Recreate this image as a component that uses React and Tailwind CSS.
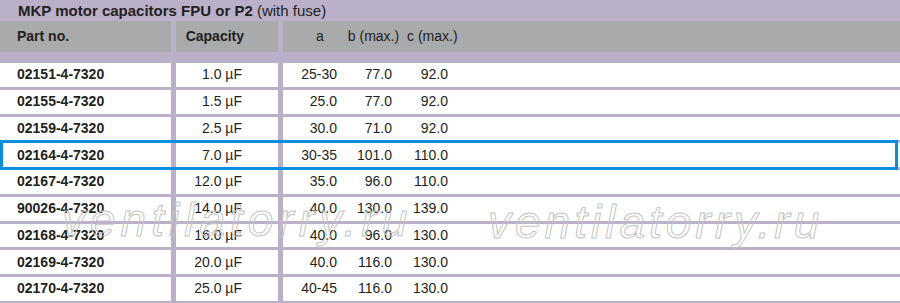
import React from "react";

const rows = [
  { part: "02151-4-7320", cap: "1.0 µF", a: "25-30", b: "77.0", c: "92.0" },
  { part: "02155-4-7320", cap: "1.5 µF", a: "25.0", b: "77.0", c: "92.0" },
  { part: "02159-4-7320", cap: "2.5 µF", a: "30.0", b: "71.0", c: "92.0" },
  { part: "02164-4-7320", cap: "7.0 µF", a: "30-35", b: "101.0", c: "110.0", active: true },
  { part: "02167-4-7320", cap: "12.0 µF", a: "35.0", b: "96.0", c: "110.0" },
  { part: "90026-4-7320", cap: "14.0 µF", a: "40.0", b: "130.0", c: "139.0" },
  { part: "02168-4-7320", cap: "16.0 µF", a: "40.0", b: "96.0", c: "130.0" },
  { part: "02169-4-7320", cap: "20.0 µF", a: "40.0", b: "116.0", c: "130.0" },
  { part: "02170-4-7320", cap: "25.0 µF", a: "40-45", b: "116.0", c: "130.0" },
];

function Row({ row }) {
  return (
    <div className="relative flex gap-[5px] h-[23.75px] shrink-0">
      <div className="w-[171px] bg-white flex items-center pl-[17px] font-bold">
        {row.part}
      </div>
      <div className="w-[102px] bg-white flex items-center justify-end pr-[36px]">
        {row.cap}
      </div>
      <div className="flex-1 bg-white flex items-center">
        <span className="w-[54px] text-right">{row.a}</span>
        <span className="w-[55px] text-right">{row.b}</span>
        <span className="w-[56px] text-right">{row.c}</span>
      </div>
      {row.active && (
        <div className="absolute left-0 right-[2px] -top-[3px] -bottom-[3px] border-[3px] border-[#0a8ede]" />
      )}
    </div>
  );
}

export default function App() {
  return (
    <div className="relative w-[900px] h-[303px] overflow-hidden bg-[#bab0ca] text-[#231f20] text-[14px] font-['Liberation_Sans',sans-serif]">
      <div className="h-[21px] flex items-center pl-[18px] text-[15px] leading-none">
        <span className="font-bold">MKP motor capacitors FPU or P2</span>
        <span>&nbsp;(with fuse)</span>
      </div>

      <div className="flex gap-[5px] h-[31px]">
        <div className="w-[171px] bg-[#a9aaac] flex items-center pl-[17px] font-bold">
          Part no.
        </div>
        <div className="w-[102px] bg-[#a9aaac] flex items-center justify-end pr-[34px] font-bold">
          Capacity
        </div>
        <div className="flex-1 bg-[#a9aaac] flex items-center whitespace-nowrap">
          <span className="ml-[17px] w-[40px] text-center">a</span>
          <span className="w-[67px] text-center">b (max.)</span>
          <span className="w-[50px] text-center">c (max.)</span>
        </div>
      </div>

      <div className="mt-[11px] flex flex-col gap-[3px]">
        {rows.map((row) => (
          <Row key={row.part} row={row} />
        ))}
      </div>

      <div className="pointer-events-none absolute top-[197px] left-[62px] text-[46px] italic tracking-[5px] text-transparent [-webkit-text-stroke:1px_#c4c4c4] font-['Liberation_Sans',sans-serif] leading-none">
        ventilatorry.ru
      </div>
      <div className="pointer-events-none absolute top-[199px] left-[488px] text-[46px] italic tracking-[4px] text-transparent [-webkit-text-stroke:1px_#c4c4c4] font-['Liberation_Sans',sans-serif] leading-none">
        ventilatorry.ru
      </div>
    </div>
  );
}
